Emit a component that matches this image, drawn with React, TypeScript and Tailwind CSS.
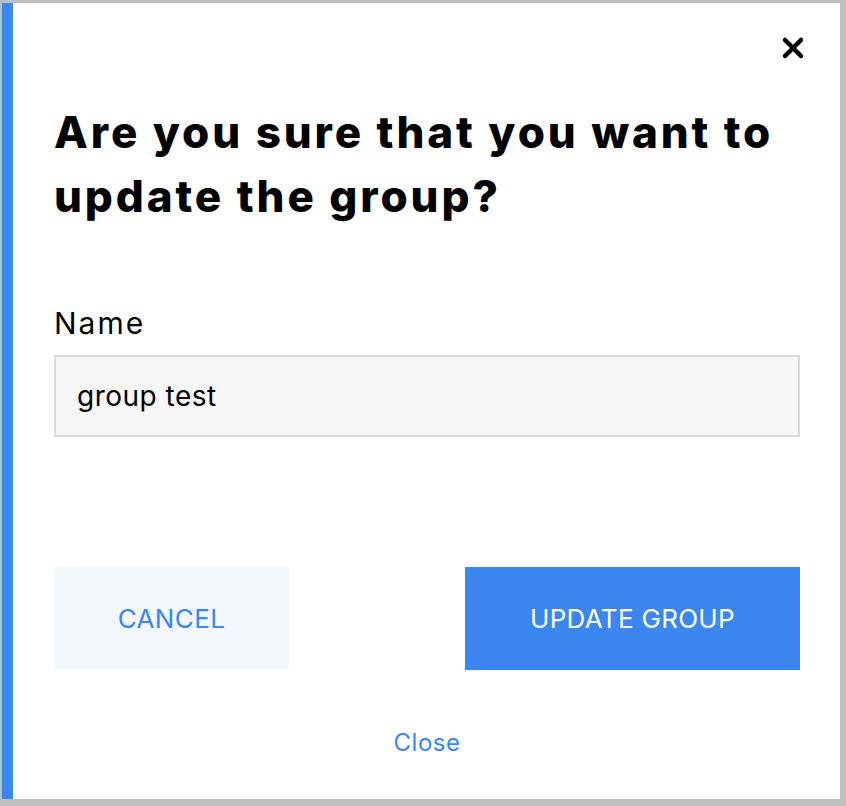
import { X } from 'lucide-react';

export default function App() {
  return (
    <div className="h-[806px] w-full bg-[#bebebe] pt-[3px] pl-[2px] pr-[6px] pb-[7px] overflow-hidden" style={{ fontFamily: 'Inter, "Noto Sans", sans-serif' }}>
      <div className="h-full bg-white border-l-[11px] border-[#3b86ef] flex flex-col pl-[41px] pr-[40px]">
        {/* Close icon */}
        <div className="flex justify-end pt-[29px] -mr-[9px]">
          <X className="w-[32px] h-[32px] text-black" strokeWidth={3.4} />
        </div>

        <h1 className="mt-[36px] text-[44px] leading-[64px] font-extrabold text-black tracking-[2.9px]">
          Are you sure that you want to update the group?
        </h1>

        <label className="mt-[79px] text-[30px] leading-[32px] text-black tracking-[2px]">Name</label>
        <div className="mt-[16px] h-[82px] bg-[#f7f7f7] border-2 border-[#d9dadd] flex items-center px-[21px] text-[28px] text-black tracking-[0.5px]">
          group test
        </div>

        <div className="mt-[130px] flex justify-between">
          <button className="w-[235px] h-[103px] bg-[#f2f7fc] text-[#3b86ef] text-[26px] tracking-[0.4px]">CANCEL</button>
          <button className="w-[335px] h-[103px] bg-[#3b86ef] text-white text-[26px] tracking-[0.3px]">UPDATE GROUP</button>
        </div>

        <div className="mt-[55px] flex justify-center">
          <span className="text-[24px] text-[#3b86ef] tracking-[0.5px]">Close</span>
        </div>
      </div>
    </div>
  );
}
